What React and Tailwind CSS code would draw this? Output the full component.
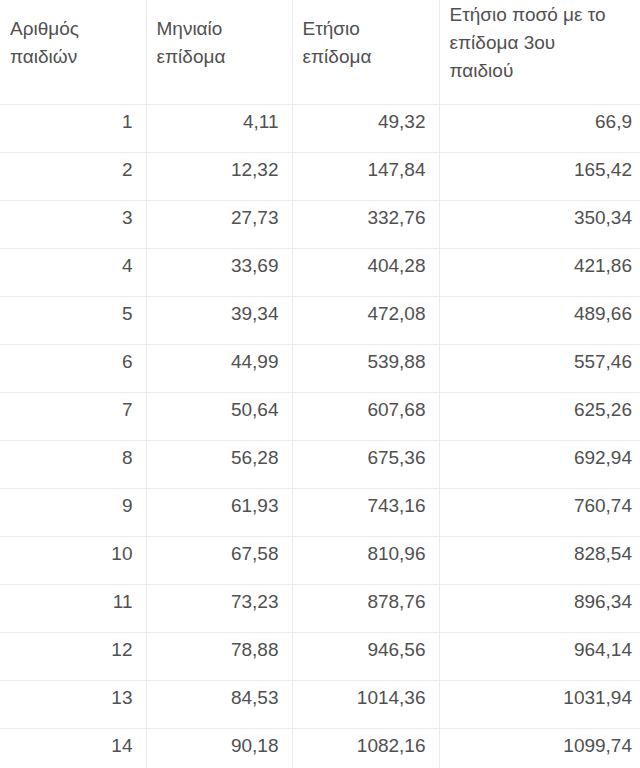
import React from 'react';

const rows = [
  [1, '4,11', '49,32', '66,9'],
  [2, '12,32', '147,84', '165,42'],
  [3, '27,73', '332,76', '350,34'],
  [4, '33,69', '404,28', '421,86'],
  [5, '39,34', '472,08', '489,66'],
  [6, '44,99', '539,88', '557,46'],
  [7, '50,64', '607,68', '625,26'],
  [8, '56,28', '675,36', '692,94'],
  [9, '61,93', '743,16', '760,74'],
  [10, '67,58', '810,96', '828,54'],
  [11, '73,23', '878,76', '896,34'],
  [12, '78,88', '946,56', '964,14'],
  [13, '84,53', '1014,36', '1031,94'],
  [14, '90,18', '1082,16', '1099,74'],
];

const th = 'border border-[#ececec] border-t-0 pl-[10px] pr-[13px] pt-0 pb-[18px] h-[104px] align-middle text-left font-normal';
const td = 'border border-[#ececec] pl-[10px] pr-[13px] pt-[3px] pb-[16px] h-[48px] align-top text-right';

export default function App() {
  return (
    <div className="w-[640px] h-[768px] overflow-hidden bg-white">
      <table
        className="w-[646px] table-fixed border-collapse text-[19px] leading-[28px] text-[#505050]"
        style={{ fontFamily: '"Liberation Sans", Arial, sans-serif' }}
      >
        <colgroup>
          <col className="w-[146px]" />
          <col className="w-[146px]" />
          <col className="w-[147px]" />
          <col />
        </colgroup>
        <thead>
          <tr>
            <th className={`${th} border-l-0`}>Αριθμός παιδιών</th>
            <th className={th}>Μηνιαίο επίδομα</th>
            <th className={th}>Ετήσιο επίδομα</th>
            <th className={th}>
              Ετήσιο ποσό με το
              <br />
              επίδομα 3ου
              <br />
              παιδιού
            </th>
          </tr>
        </thead>
        <tbody>
          {rows.map((r) => (
            <tr key={r[0]}>
              {r.map((c, i) => (
                <td key={i} className={`${td} ${i === 0 ? 'border-l-0' : ''}`}>
                  {c}
                </td>
              ))}
            </tr>
          ))}
        </tbody>
      </table>
    </div>
  );
}
